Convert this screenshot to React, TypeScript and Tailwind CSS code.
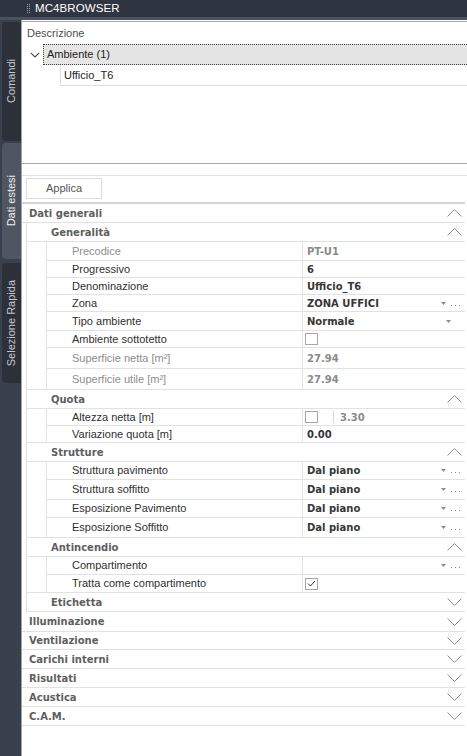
import React from 'react';

type Value =
  | { type: 'text'; text: string; muted?: boolean; arrow?: boolean; dots?: boolean }
  | { type: 'check'; checked?: boolean; extra?: string }
  | { type: 'picker' };

type Row = { label: string; h: number; muted?: boolean; value: Value };
type Sub = { title: string; open: boolean; rows: Row[] };

// full class names so tailwind can see them
const H: Record<number, string> = {
  16: 'h-[16px]',
  17: 'h-[17px]',
  18: 'h-[18px]',
  19: 'h-[19px]',
  20: 'h-[20px]',
  21: 'h-[21px]',
};

const subs: Sub[] = [
  {
    title: 'Generalità',
    open: true,
    rows: [
      { label: 'Precodice', h: 19, muted: true, value: { type: 'text', text: 'PT-U1', muted: true } },
      { label: 'Progressivo', h: 17, value: { type: 'text', text: '6' } },
      { label: 'Denominazione', h: 17, value: { type: 'text', text: 'Ufficio_T6' } },
      { label: 'Zona', h: 17, value: { type: 'text', text: 'ZONA UFFICI', arrow: true, dots: true } },
      { label: 'Tipo ambiente', h: 19, value: { type: 'text', text: 'Normale', arrow: true } },
      { label: 'Ambiente sottotetto', h: 17, value: { type: 'check' } },
      { label: 'Superficie netta [m²]', h: 21, muted: true, value: { type: 'text', text: '27.94', muted: true } },
      { label: 'Superficie utile [m²]', h: 21, muted: true, value: { type: 'text', text: '27.94', muted: true } },
    ],
  },
  {
    title: 'Quota',
    open: true,
    rows: [
      { label: 'Altezza netta [m]', h: 17, value: { type: 'check', extra: '3.30' } },
      { label: 'Variazione quota [m]', h: 17, value: { type: 'text', text: '0.00' } },
    ],
  },
  {
    title: 'Strutture',
    open: true,
    rows: [
      { label: 'Struttura pavimento', h: 18, value: { type: 'text', text: 'Dal piano', arrow: true, dots: true } },
      { label: 'Struttura soffitto', h: 20, value: { type: 'text', text: 'Dal piano', arrow: true, dots: true } },
      { label: 'Esposizione Pavimento', h: 18, value: { type: 'text', text: 'Dal piano', arrow: true, dots: true } },
      { label: 'Esposizione Soffitto', h: 20, value: { type: 'text', text: 'Dal piano', arrow: true, dots: true } },
    ],
  },
  {
    title: 'Antincendio',
    open: true,
    rows: [
      { label: 'Compartimento', h: 18, value: { type: 'picker' } },
      { label: 'Tratta come compartimento', h: 18, value: { type: 'check', checked: true } },
    ],
  },
  { title: 'Etichetta', open: false, rows: [] },
];

const closedSections: { title: string; h: number }[] = [
  { title: 'Illuminazione', h: 20 },
  { title: 'Ventilazione', h: 18 },
  { title: 'Carichi interni', h: 19 },
  { title: 'Risultati', h: 19 },
  { title: 'Acustica', h: 19 },
  { title: 'C.A.M.', h: 19 },
];

const Chevron = ({ up }: { up: boolean }) => (
  <svg width="15" height="8" viewBox="0 0 15 8" className="shrink-0">
    <polyline
      points={up ? '0.5,7.5 7.5,0.5 14.5,7.5' : '0.5,0.5 7.5,7.5 14.5,0.5'}
      fill="none"
      stroke="#8e8e8e"
      strokeWidth="1"
    />
  </svg>
);

const Arrow = () => (
  <svg width="5" height="3" viewBox="0 0 5 3" className="shrink-0">
    <polygon points="0,0 5,0 2.5,3" fill="#8c8c8c" />
  </svg>
);

const Dots = () => (
  <svg width="9" height="2" viewBox="0 0 9 2" className="shrink-0 mt-[5px]">
    <rect x="0" y="0" width="1" height="1" fill="#8c8c8c" />
    <rect x="4" y="0" width="1" height="1" fill="#8c8c8c" />
    <rect x="8" y="0" width="1" height="1" fill="#8c8c8c" />
  </svg>
);

const CheckBox = ({ checked }: { checked?: boolean }) => (
  <div className="ml-[2px] w-[13px] h-[12px] border border-[#a6a6a6] bg-white flex items-center justify-center">
    {checked && (
      <svg width="9" height="7" viewBox="0 0 9 7">
        <polyline points="1,3.5 3.5,6 8,1" fill="none" stroke="#333" strokeWidth="1" />
      </svg>
    )}
  </div>
);

const ValueCell = ({ value }: { value: Value }) => {
  if (value.type === 'check') {
    return (
      <div className="flex items-center h-full">
        <CheckBox checked={value.checked} />
        {value.extra && (
          <>
            <div className="ml-[15px] w-px h-[12px] bg-[#d6d6d6]" />
            <span className="ml-[6px] font-['DejaVu_Sans'] font-bold text-[10px] text-[#8a8a8a]">{value.extra}</span>
          </>
        )}
      </div>
    );
  }
  if (value.type === 'picker') {
    return (
      <div className="flex items-center h-full">
        <div className="ml-auto flex items-center gap-[5px] pr-[5px]">
          <Arrow />
          <Dots />
        </div>
      </div>
    );
  }
  return (
    <div className="flex items-center h-full">
      <span
        className={`pl-[4px] font-['DejaVu_Sans'] font-bold text-[10px] ${value.muted ? 'text-[#8a8a8a]' : 'text-[#363636]'}`}
      >
        {value.text}
      </span>
      {value.arrow && value.dots && (
        <div className="ml-auto flex items-center gap-[5px] pr-[5px]">
          <Arrow />
          <Dots />
        </div>
      )}
      {value.arrow && !value.dots && (
        <div className="ml-auto flex items-center pr-[14px]">
          <Arrow />
        </div>
      )}
    </div>
  );
};

const PropRow = ({ row, last }: { row: Row; last: boolean }) => (
  <div className={`flex ${last ? H[row.h - 1] : H[row.h]} ${last ? '' : 'border-b border-[#e1e1e1]'}`}>
    <div
      className={`w-[255px] shrink-0 flex items-center pl-[25px] text-[11px] ${row.muted ? 'text-[#8d8d8d]' : 'text-[#303030]'}`}
    >
      {row.label}
    </div>
    <div className="flex-1 border-l border-[#e1e1e1]">
      <ValueCell value={row.value} />
    </div>
  </div>
);

const HeaderText = ({ children }: { children: React.ReactNode }) => (
  <span className="font-['DejaVu_Sans'] font-bold text-[10px] text-[#5e5e5e]">{children}</span>
);

const Sidebar = () => (
  <div className="w-[21px] shrink-0 bg-[#3a414e] flex flex-col">
    <div className="mt-[2px] ml-[2px] h-[119px] rounded-l-[4px] bg-[#2b3039] flex items-center justify-center">
      <span className="[writing-mode:vertical-rl] rotate-180 text-[11px] text-[#c5c9cf]">Comandi</span>
    </div>
    <div className="mt-[2px] ml-[2px] h-[116px] rounded-l-[4px] bg-[#4f5662] flex items-center justify-center">
      <span className="[writing-mode:vertical-rl] rotate-180 text-[11px] text-[#eceef1]">Dati estesi</span>
    </div>
    <div className="mt-[4px] ml-[2px] h-[120px] rounded-l-[4px] bg-[#2b3039] flex items-center justify-center">
      <span className="[writing-mode:vertical-rl] rotate-180 text-[11px] text-[#c5c9cf]">Selezione Rapida</span>
    </div>
  </div>
);

const Tree = () => (
  <div className="mt-[1px] h-[143px] border-t border-b border-[#a8a8a8] flex flex-col">
    <div className="h-[22px] shrink-0 flex items-center pl-[5px] text-[11px] text-[#4d4d4d]">Descrizione</div>
    <div className="h-[21px] shrink-0 flex">
      <div className="w-[21px] flex items-center justify-center pl-[4px]">
        <svg width="10" height="6" viewBox="0 0 10 6">
          <polyline points="0.8,0.8 5,5 9.2,0.8" fill="none" stroke="#4a4a4a" strokeWidth="1.2" />
        </svg>
      </div>
      <div className="flex-1 bg-[#e5e5e5] border border-dotted border-[#3c3c3c] border-r-0 flex items-center pl-[3px] text-[11px] text-[#222]">
        Ambiente (1)
      </div>
    </div>
    <div className="h-[21px] shrink-0 ml-[38px] border-l border-b border-[#dedede] flex items-center pl-[3px] text-[11px] text-[#222]">
      Ufficio_T6
    </div>
  </div>
);

export default function App() {
  return (
    <div className="w-[467px] h-[756px] overflow-hidden flex flex-col bg-white font-['Liberation_Sans',Arial,sans-serif]">
      {/* title bar */}
      <div className="h-[17px] shrink-0 bg-[#2f3541] flex items-center">
        <svg width="3" height="10" viewBox="0 0 3 10" className="ml-[27px]">
          {[0, 2, 4, 6, 8].map((y) => (
            <g key={y}>
              <rect x="0" y={y} width="1" height="1" fill="#9aa1ab" />
              <rect x="2" y={y} width="1" height="1" fill="#9aa1ab" />
            </g>
          ))}
        </svg>
        <span className="ml-[5px] text-[11.5px] text-white tracking-[0.1px]">MC4BROWSER</span>
      </div>
      <div className="h-[3px] shrink-0 bg-[#4a5261]" />

      <div className="flex flex-1 min-h-0">
        <Sidebar />
        <div className="flex-1 border-l border-[#9ea3ab] flex flex-col">
          <Tree />

          <div className="h-[11px] shrink-0" />
          <div className="h-[27px] shrink-0 border-t border-[#e2e2e2] pt-[2px] pl-[4px]">
            <div className="w-[76px] h-[21px] border border-[#dcdcdc] flex items-center justify-center text-[11px] text-[#555]">
              Applica
            </div>
          </div>

          {/* property grid */}
          <div className="w-[443px] border-t-2 border-[#d6d6d6]">
            <div className="h-[19px] border-b border-[#e1e1e1] flex items-center justify-between pl-[7px] pr-[3px]">
              <HeaderText>Dati generali</HeaderText>
              <Chevron up />
            </div>
            <div className="ml-[4px] border-l border-[#e1e1e1]">
              {subs.map((sub) => (
                <div key={sub.title} className={sub.rows.length > 0 ? 'border-b border-[#e1e1e1]' : ''}>
                  <div className="h-[19px] border-b border-[#e1e1e1] flex items-center justify-between pl-[24px] pr-[3px]">
                    <HeaderText>{sub.title}</HeaderText>
                    <Chevron up={sub.open} />
                  </div>
                  {sub.rows.length > 0 && (
                    <div className="ml-[19px] border-l border-[#e1e1e1]">
                      {sub.rows.map((row, i) => (
                        <PropRow key={row.label} row={row} last={i === sub.rows.length - 1} />
                      ))}
                    </div>
                  )}
                </div>
              ))}
            </div>
            {closedSections.map((s) => (
              <div
                key={s.title}
                className={`${H[s.h]} border-b border-[#e1e1e1] flex items-center justify-between pl-[7px] pr-[3px]`}
              >
                <HeaderText>{s.title}</HeaderText>
                <Chevron up={false} />
              </div>
            ))}
          </div>
        </div>
      </div>
    </div>
  );
}
